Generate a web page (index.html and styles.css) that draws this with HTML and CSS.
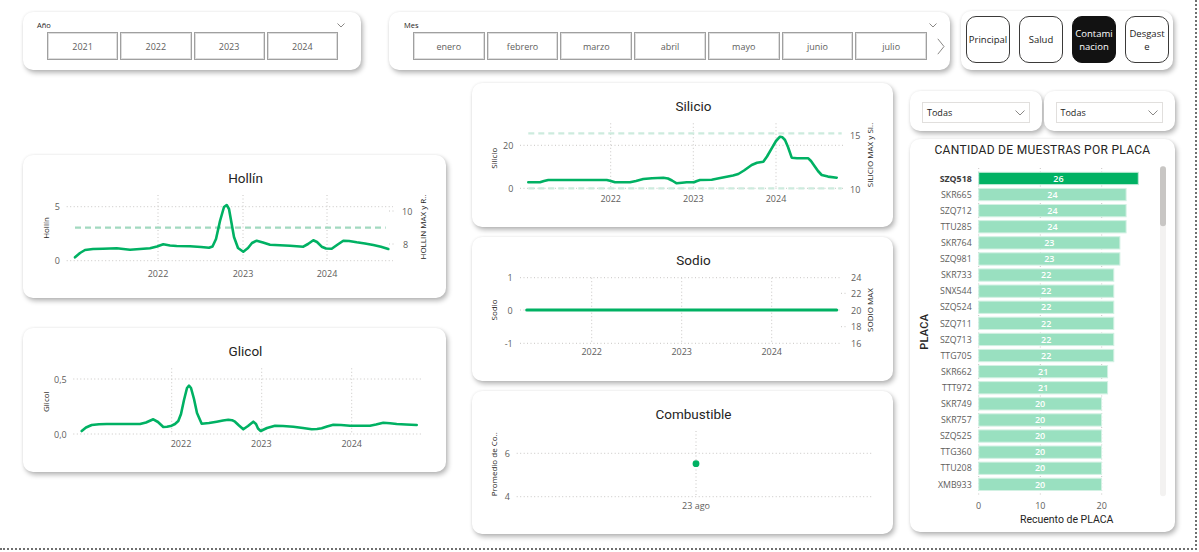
FILE: index.html
```html
<!DOCTYPE html>
<html lang="es">
<head>
<meta charset="utf-8">
<title>Contaminación</title>
<link rel="stylesheet" href="styles.css">
</head>
<body>
<div class="canvas">
  <div class="top">
    <section class="card slicer slicer-year">
      <div class="slicer-head"><span class="slicer-label">Año</span>
        <svg class="chev" width="8" height="5" viewBox="0 0 8 5"><polyline points="0.5,0.5 4,4 7.5,0.5"/></svg></div>
      <div class="chips chips-year">
        <div class="chip">2021</div><div class="chip">2022</div><div class="chip">2023</div><div class="chip">2024</div>
      </div>
    </section>
    <section class="card slicer slicer-month">
      <div class="slicer-head"><span class="slicer-label">Mes</span>
        <svg class="chev" width="8" height="5" viewBox="0 0 8 5"><polyline points="0.5,0.5 4,4 7.5,0.5"/></svg></div>
      <div class="chips-wrap">
        <div class="chips chips-month">
          <div class="chip">enero</div><div class="chip">febrero</div><div class="chip">marzo</div><div class="chip">abril</div><div class="chip">mayo</div><div class="chip">junio</div><div class="chip">julio</div>
        </div>
        <svg class="next" width="8" height="17" viewBox="0 0 8 17"><polyline points="0.8,0.8 7,8.5 0.8,16.2"/></svg>
      </div>
    </section>
    <nav class="card navcard">
      <div class="navbtn">Principal</div>
      <div class="navbtn">Salud</div>
      <div class="navbtn active">Contaminacion</div>
      <div class="navbtn">Desgaste</div>
    </nav>
  </div>

  <div class="main">
    <div class="col col-left">
      <section class="card chart h143">
        <h2 class="chart-title">Hollín</h2>
        <svg class="plot" width="423" height="111" viewBox="0 32 423 111">
          <line class="grid" x1="43.7" y1="51.7" x2="370" y2="51.7"/>
          <line class="grid" x1="43.7" y1="105.7" x2="370" y2="105.7"/>
          <line class="grid" x1="135" y1="40" x2="135" y2="106"/>
          <line class="grid" x1="220" y1="40" x2="220" y2="106"/>
          <line class="grid" x1="304" y1="40" x2="304" y2="106"/>
          <line class="grid" x1="366" y1="56" x2="373" y2="56"/>
          <line class="grid" x1="366" y1="89" x2="373" y2="89"/>
          <line class="ref" x1="52" y1="72.7" x2="362.7" y2="72.7"/>
          <text class="tick" x="37" y="55" text-anchor="end">5</text>
          <text class="tick" x="37" y="109" text-anchor="end">0</text>
          <text class="tick" x="379" y="59.5">10</text>
          <text class="tick" x="380" y="92.5">8</text>
          <text class="tick" x="135" y="122" text-anchor="middle">2022</text>
          <text class="tick" x="220" y="122" text-anchor="middle">2023</text>
          <text class="tick" x="304" y="122" text-anchor="middle">2024</text>
          <text class="atitle" transform="translate(26,73) rotate(-90)" text-anchor="middle">Hollín</text>
          <text class="atitle" transform="translate(403,72) rotate(-90)" text-anchor="middle">HOLLIN MAX y R..</text>
          <polyline class="line" points="52,102.3 57,98 62,95 70,94 80,93.7 93.7,93.3 107,94.7 117,94 127,93.3 134,91.5 140.3,89.3 147,90.5 153.7,91 167,91.3 178,92 186,92.8 189.5,91.5 193,84 197,66 201,52 203.7,50 206,54 208.5,68 211,82 215,93 220.3,96.7 225,93 229,88 233.7,85.7 240,87.5 247,89.7 257,90.2 267,90.7 280.3,91.7 285,89 290.3,85.3 294,87 298.7,91.7 303,93.5 308.7,93.7 314,90 320.3,85.7 326,86 333.7,87.3 342,88.5 350.3,90 358,91.8 365.3,94"/>
        </svg>
      </section>
      <section class="card chart h144">
        <h2 class="chart-title">Glicol</h2>
        <svg class="plot" width="423" height="112" viewBox="0 32 423 112">
          <line class="grid" x1="50.3" y1="51" x2="400.3" y2="51"/>
          <line class="grid" x1="50.3" y1="106" x2="400.3" y2="106"/>
          <line class="grid" x1="148.7" y1="40.3" x2="148.7" y2="106"/>
          <line class="grid" x1="238.7" y1="40.3" x2="238.7" y2="106"/>
          <line class="grid" x1="328.7" y1="40.3" x2="328.7" y2="106"/>
          <text class="tick" x="43.7" y="54.5" text-anchor="end">0,5</text>
          <text class="tick" x="43.7" y="109.5" text-anchor="end">0,0</text>
          <text class="tick" x="158" y="118.5" text-anchor="middle">2022</text>
          <text class="tick" x="238.3" y="118.5" text-anchor="middle">2023</text>
          <text class="tick" x="328.7" y="118.5" text-anchor="middle">2024</text>
          <text class="atitle" transform="translate(26,73.7) rotate(-90)" text-anchor="middle">Glicol</text>
          <polyline class="line" points="58.7,103 63,99.5 68.7,97 76,96.2 83.7,96 100,96 117,96 123,94.5 130.3,91.3 135,94 140.3,99 144,98.8 148.7,97.7 152,96 155.3,93 158,86 161,72 164,60 166,57.7 168,60 171,71 174,85 178.7,95.7 186,95 193.7,93.7 200,92.5 205.3,91.7 209,92.2 212,93.7 216,97.5 220.3,101.3 225,98 230.3,93.7 233,96 235,100.5 237.7,103 244,100 252,97.7 260,98 270.3,98.7 280,100 288.7,101.3 294,101 298.7,100.3 304,98.5 310.3,96.7 318,97 327,97.7 337,97.7 347,97.7 353,96.5 360.3,94.7 367,95.2 373.7,96 383,96.5 393.7,97"/>
        </svg>
      </section>
    </div>

    <div class="col col-mid">
      <section class="card chart h144">
        <h2 class="chart-title">Silicio</h2>
        <svg class="plot" width="421" height="112" viewBox="0 32 421 112">
          <line class="grid" x1="48" y1="62.3" x2="371.3" y2="62.3"/>
          <line class="grid" x1="48" y1="105.3" x2="371.3" y2="105.3"/>
          <line class="grid" x1="138.7" y1="40.3" x2="138.7" y2="105.3"/>
          <line class="grid" x1="221.3" y1="40.3" x2="221.3" y2="105.3"/>
          <line class="grid" x1="304" y1="40.3" x2="304" y2="105.3"/>
          <line class="ref light" x1="56.3" y1="50.3" x2="369.7" y2="50.3"/>
          <line class="ref light" x1="56.3" y1="105.3" x2="369.7" y2="105.3"/>
          <text class="tick" x="41.3" y="65.8" text-anchor="end">20</text>
          <text class="tick" x="41.3" y="108.8" text-anchor="end">0</text>
          <text class="tick" x="378" y="55.5">15</text>
          <text class="tick" x="378" y="109.5">10</text>
          <text class="tick" x="138.7" y="118.8" text-anchor="middle">2022</text>
          <text class="tick" x="221.3" y="118.8" text-anchor="middle">2023</text>
          <text class="tick" x="304" y="118.8" text-anchor="middle">2024</text>
          <text class="atitle" transform="translate(25,75.3) rotate(-90)" text-anchor="middle">Silicio</text>
          <text class="atitle" transform="translate(401,72) rotate(-90)" text-anchor="middle">SILICIO MAX y SI..</text>
          <polyline class="line" points="56.3,99.3 68,99.3 72,98 76.3,97 100,97 134.7,97 138,97.8 143,99.3 158,99.3 164,98 171.3,96 180,95.2 191.3,94.7 196,95.5 200,97.5 204.7,100.3 210,99.8 214.7,99.3 222,99.3 225,98 228,97 239.7,96.7 247,95.3 254.7,93.7 261,92.5 266.3,91 272,87.5 279.7,82 285,79.8 291.3,78.7 295,73.5 299.7,65.3 304,58 308,53.7 310.5,54.3 313,57 316,64 319.7,74.7 325,75.2 336.3,75.3 339,78 343,83.7 346,88 349.7,92 356,93.6 364.7,94.7"/>
        </svg>
      </section>
      <section class="card chart h144">
        <h2 class="chart-title">Sodio</h2>
        <svg class="plot" width="421" height="112" viewBox="0 32 421 112">
          <line class="grid" x1="48" y1="40.7" x2="369.7" y2="40.7"/>
          <line class="grid" x1="48" y1="73" x2="369.7" y2="73"/>
          <line class="grid" x1="48" y1="106.3" x2="369.7" y2="106.3"/>
          <line class="grid" x1="119.7" y1="40.7" x2="119.7" y2="106.3"/>
          <line class="grid" x1="209.7" y1="40.7" x2="209.7" y2="106.3"/>
          <line class="grid" x1="299.7" y1="40.7" x2="299.7" y2="106.3"/>
          <line class="grid" x1="369" y1="56.3" x2="374" y2="56.3"/>
          <line class="grid" x1="369" y1="89.7" x2="374" y2="89.7"/>
          <text class="tick" x="40.7" y="44.2" text-anchor="end">1</text>
          <text class="tick" x="40.7" y="76.5" text-anchor="end">0</text>
          <text class="tick" x="40.7" y="109.8" text-anchor="end">-1</text>
          <text class="tick" x="379" y="44.2">24</text>
          <text class="tick" x="379" y="59.8">22</text>
          <text class="tick" x="379" y="76.5">20</text>
          <text class="tick" x="379" y="93.2">18</text>
          <text class="tick" x="379" y="109.8">16</text>
          <text class="tick" x="119.7" y="118.2" text-anchor="middle">2022</text>
          <text class="tick" x="209.7" y="118.2" text-anchor="middle">2023</text>
          <text class="tick" x="299.7" y="118.2" text-anchor="middle">2024</text>
          <text class="atitle" transform="translate(25,73) rotate(-90)" text-anchor="middle">Sodio</text>
          <text class="atitle" transform="translate(401,73) rotate(-90)" text-anchor="middle">SODIO MAX</text>
          <line class="line flat" x1="54.7" y1="73" x2="364.7" y2="73"/>
        </svg>
      </section>
      <section class="card chart h143">
        <h2 class="chart-title">Combustible</h2>
        <svg class="plot" width="421" height="111" viewBox="0 32 421 111">
          <line class="grid" x1="44.7" y1="62.3" x2="401.3" y2="62.3"/>
          <line class="grid" x1="44.7" y1="105.7" x2="401.3" y2="105.7"/>
          <line class="grid" x1="224" y1="40" x2="224" y2="105.7"/>
          <circle class="dot" cx="224" cy="72.7" r="3.4"/>
          <text class="tick" x="38" y="65.8" text-anchor="end">6</text>
          <text class="tick" x="38" y="109.2" text-anchor="end">4</text>
          <text class="tick" x="224" y="117.8" text-anchor="middle">23 ago</text>
          <text class="atitle" transform="translate(25,73.3) rotate(-90)" text-anchor="middle">Promedio de Co..</text>
        </svg>
      </section>
    </div>

    <div class="col col-right">
      <div class="dd-row">
        <section class="card ddcard">
          <div class="dd"><span>Todas</span><svg class="dd-chev" width="10" height="6" viewBox="0 0 10 6"><polyline points="0.5,0.5 5,5 9.5,0.5"/></svg></div>
        </section>
        <section class="card ddcard">
          <div class="dd"><span>Todas</span><svg class="dd-chev" width="10" height="6" viewBox="0 0 10 6"><polyline points="0.5,0.5 5,5 9.5,0.5"/></svg></div>
        </section>
      </div>
      <section class="card barcard">
        <h2 class="bar-title">CANTIDAD DE MUESTRAS POR PLACA</h2>
        <svg class="plot" width="265" height="369" viewBox="0 24 265 369">
          <line class="grid" x1="68.7" y1="29" x2="68.7" y2="358"/>
          <line class="grid" x1="130.3" y1="29" x2="130.3" y2="358"/>
          <line class="grid" x1="191.7" y1="29" x2="191.7" y2="358"/>
          <g id="bars"></g>
          <rect class="track" x="250" y="27.3" width="6" height="330" rx="3"/>
          <rect class="thumb" x="250" y="27.3" width="6" height="60" rx="3"/>
          <text class="tick" x="68.7" y="370" text-anchor="middle">0</text>
          <text class="tick" x="130.3" y="370" text-anchor="middle">10</text>
          <text class="tick" x="191.7" y="370" text-anchor="middle">20</text>
          <text class="xlabel" x="156.7" y="384" text-anchor="middle">Recuento de PLACA</text>
          <text class="ylabel" transform="translate(18,192.7) rotate(-90)" text-anchor="middle">PLACA</text>

          <rect class="bar top" x="68.7" y="33.3" width="159.6" height="12.3"/>
          <text class="cat b" x="61.7" y="42.6" text-anchor="end">SZQ518</text>
          <text class="val" x="148.5" y="42.6" text-anchor="middle">26</text>

          <rect class="bar" x="68.7" y="49.4" width="147.4" height="12.3"/>
          <text class="cat" x="61.7" y="58.7" text-anchor="end">SKR665</text>
          <text class="val" x="142.4" y="58.7" text-anchor="middle">24</text>

          <rect class="bar" x="68.7" y="65.5" width="147.4" height="12.3"/>
          <text class="cat" x="61.7" y="74.8" text-anchor="end">SZQ712</text>
          <text class="val" x="142.4" y="74.8" text-anchor="middle">24</text>

          <rect class="bar" x="68.7" y="81.6" width="147.4" height="12.3"/>
          <text class="cat" x="61.7" y="90.9" text-anchor="end">TTU285</text>
          <text class="val" x="142.4" y="90.9" text-anchor="middle">24</text>

          <rect class="bar" x="68.7" y="97.7" width="141.2" height="12.3"/>
          <text class="cat" x="61.7" y="107" text-anchor="end">SKR764</text>
          <text class="val" x="139.3" y="107" text-anchor="middle">23</text>

          <rect class="bar" x="68.7" y="113.8" width="141.2" height="12.3"/>
          <text class="cat" x="61.7" y="123.1" text-anchor="end">SZQ981</text>
          <text class="val" x="139.3" y="123.1" text-anchor="middle">23</text>

          <rect class="bar" x="68.7" y="129.9" width="135.1" height="12.3"/>
          <text class="cat" x="61.7" y="139.2" text-anchor="end">SKR733</text>
          <text class="val" x="136.2" y="139.2" text-anchor="middle">22</text>

          <rect class="bar" x="68.7" y="146" width="135.1" height="12.3"/>
          <text class="cat" x="61.7" y="155.3" text-anchor="end">SNX544</text>
          <text class="val" x="136.2" y="155.3" text-anchor="middle">22</text>

          <rect class="bar" x="68.7" y="162.1" width="135.1" height="12.3"/>
          <text class="cat" x="61.7" y="171.4" text-anchor="end">SZQ524</text>
          <text class="val" x="136.2" y="171.4" text-anchor="middle">22</text>

          <rect class="bar" x="68.7" y="178.2" width="135.1" height="12.3"/>
          <text class="cat" x="61.7" y="187.5" text-anchor="end">SZQ711</text>
          <text class="val" x="136.2" y="187.5" text-anchor="middle">22</text>

          <rect class="bar" x="68.7" y="194.3" width="135.1" height="12.3"/>
          <text class="cat" x="61.7" y="203.6" text-anchor="end">SZQ713</text>
          <text class="val" x="136.2" y="203.6" text-anchor="middle">22</text>

          <rect class="bar" x="68.7" y="210.4" width="135.1" height="12.3"/>
          <text class="cat" x="61.7" y="219.7" text-anchor="end">TTG705</text>
          <text class="val" x="136.2" y="219.7" text-anchor="middle">22</text>

          <rect class="bar" x="68.7" y="226.5" width="128.9" height="12.3"/>
          <text class="cat" x="61.7" y="235.8" text-anchor="end">SKR662</text>
          <text class="val" x="133.2" y="235.8" text-anchor="middle">21</text>

          <rect class="bar" x="68.7" y="242.6" width="128.9" height="12.3"/>
          <text class="cat" x="61.7" y="251.9" text-anchor="end">TTT972</text>
          <text class="val" x="133.2" y="251.9" text-anchor="middle">21</text>

          <rect class="bar" x="68.7" y="258.7" width="122.8" height="12.3"/>
          <text class="cat" x="61.7" y="268" text-anchor="end">SKR749</text>
          <text class="val" x="130.1" y="268" text-anchor="middle">20</text>

          <rect class="bar" x="68.7" y="274.8" width="122.8" height="12.3"/>
          <text class="cat" x="61.7" y="284.1" text-anchor="end">SKR757</text>
          <text class="val" x="130.1" y="284.1" text-anchor="middle">20</text>

          <rect class="bar" x="68.7" y="290.9" width="122.8" height="12.3"/>
          <text class="cat" x="61.7" y="300.2" text-anchor="end">SZQ525</text>
          <text class="val" x="130.1" y="300.2" text-anchor="middle">20</text>

          <rect class="bar" x="68.7" y="307" width="122.8" height="12.3"/>
          <text class="cat" x="61.7" y="316.3" text-anchor="end">TTG360</text>
          <text class="val" x="130.1" y="316.3" text-anchor="middle">20</text>

          <rect class="bar" x="68.7" y="323.1" width="122.8" height="12.3"/>
          <text class="cat" x="61.7" y="332.4" text-anchor="end">TTU208</text>
          <text class="val" x="130.1" y="332.4" text-anchor="middle">20</text>

          <rect class="bar" x="68.7" y="339.2" width="122.8" height="12.3"/>
          <text class="cat" x="61.7" y="348.5" text-anchor="end">XMB933</text>
          <text class="val" x="130.1" y="348.5" text-anchor="middle">20</text>
        </svg>
      </section>
    </div>
  </div>
</div>
</body>
</html>
```

FILE: styles.css
```css
html, body {
  margin: 0;
  padding: 0;
  background: #ffffff;
  font-family: "Open Sans", "Noto Sans", sans-serif;
  color: #252423;
}

.canvas {
  box-sizing: border-box;
  width: 1197px;
  height: 550px;
  padding: 12px 0 0 23px;
  border-right: 2px dotted #6f6f6f;
  border-bottom: 2px dotted #6f6f6f;
  overflow: hidden;
}

.card {
  box-sizing: border-box;
  background: #ffffff;
  border-radius: 10px;
  box-shadow: 2px 3px 5px rgba(0, 0, 0, 0.28), 0 0 3px rgba(0, 0, 0, 0.08);
}

/* ---------- top row ---------- */
.top {
  display: flex;
  align-items: flex-start;
}

.slicer {
  height: 58px;
  padding: 8px 0 0 14px;
}

.slicer-year {
  width: 338px;
  margin-right: 28px;
}

.slicer-month {
  width: 561px;
  margin-right: 11px;
  padding-left: 15px;
}

.slicer-head {
  display: flex;
  align-items: center;
  justify-content: space-between;
  height: 10px;
}

.slicer-year .slicer-head { width: 308px; }
.slicer-month .slicer-head { width: 533px; }

.slicer-label {
  font-size: 7.5px;
  line-height: 10px;
  color: #252423;
}

.chev polyline,
.dd-chev polyline,
.next polyline {
  fill: none;
  stroke: #8a8886;
  stroke-width: 1;
}

.chips {
  display: flex;
  gap: 2px;
}

.chips-year {
  width: 291px;
  margin: 2px 0 0 10px;
}

.chips-wrap {
  display: flex;
  align-items: center;
  margin: 2px 0 0 9px;
}

.chips-month {
  width: 514px;
}

.next {
  margin-left: 10px;
}

.chip {
  flex: 1;
  box-sizing: border-box;
  height: 28px;
  border: 1px solid #a0a0a0;
  box-shadow: inset 0 0 0 1px #dedede;
  display: flex;
  align-items: center;
  justify-content: center;
  font-size: 9px;
  color: #605e5c;
}

.navcard {
  width: 212px;
  height: 59px;
  margin-top: -1px;
  display: flex;
  gap: 9px;
  padding: 5px 0 0 5px;
}

.navbtn {
  box-sizing: border-box;
  width: 44px;
  height: 47px;
  border: 1px solid #3b3a39;
  border-radius: 10px;
  display: flex;
  align-items: center;
  justify-content: center;
  text-align: center;
  font-size: 9.5px;
  line-height: 13px;
  color: #1b1a19;
  padding: 0 1px;
  word-break: break-all;
}

.navbtn.active {
  background: #121212;
  color: #ffffff;
  border-color: #121212;
}

/* ---------- main area ---------- */
.main {
  display: flex;
  align-items: flex-start;
  margin-top: 13px;
}

.col {
  display: flex;
  flex-direction: column;
}

.col-left {
  width: 423px;
  padding-top: 72px;
  gap: 30px;
}

.col-mid {
  width: 421px;
  margin-left: 26px;
  gap: 10px;
}

.col-right {
  width: 265px;
  margin-left: 17px;
  padding-top: 8px;
  gap: 8px;
}

.chart.h143 { height: 143px; }
.chart.h144 { height: 144px; }

.chart-title {
  box-sizing: border-box;
  margin: 0;
  height: 32px;
  padding: 15px 0 0 22px;
  text-align: center;
  font-family: Roboto, "Open Sans", sans-serif;
  font-weight: 400;
  font-size: 13.5px;
  line-height: 17px;
  color: #252423;
}

.plot {
  display: block;
}

.tick {
  font-family: "Open Sans", "Noto Sans", sans-serif;
  font-size: 9px;
  fill: #605e5c;
}

.atitle {
  font-family: "Open Sans", "Noto Sans", sans-serif;
  font-size: 8px;
  fill: #252423;
}

.grid {
  stroke: #c8c6c4;
  stroke-width: 1;
  stroke-dasharray: 1 2.5;
}

.ref {
  stroke: #a2d9c0;
  stroke-width: 2.2;
  stroke-dasharray: 6 4;
}

.ref.light {
  stroke: #cdebde;
}

.line {
  fill: none;
  stroke: #00b163;
  stroke-width: 2.6;
  stroke-linejoin: round;
  stroke-linecap: round;
}

.line.flat {
  stroke-width: 3;
}

.dot {
  fill: #00b163;
}

/* ---------- right column ---------- */
.dd-row {
  display: flex;
  gap: 2px;
  height: 40px;
}

.ddcard {
  flex: 1;
  padding: 11px 12px 0 12px;
}

.dd {
  box-sizing: border-box;
  height: 21px;
  border: 1px solid #e1dfdd;
  display: flex;
  align-items: center;
  justify-content: space-between;
  padding: 0 4px 0 4px;
  font-size: 9px;
  color: #252423;
}

.barcard {
  height: 393px;
}

.bar-title {
  box-sizing: border-box;
  margin: 0;
  height: 24px;
  padding-top: 4px;
  text-align: center;
  font-family: Roboto, "Open Sans", sans-serif;
  font-weight: 400;
  font-size: 12px;
  line-height: 15px;
  letter-spacing: 0.3px;
  color: #252423;
}

.bar {
  fill: #99e0c0;
  stroke: #d2f1e3;
  stroke-width: 1;
}

.bar.top {
  fill: #00b163;
  stroke: #bfead6;
}

.cat {
  font-family: "Open Sans", "Noto Sans", sans-serif;
  font-size: 8.8px;
  fill: #605e5c;
}

.cat.b {
  font-weight: 700;
  fill: #3b3a39;
}

.val {
  font-family: "Open Sans", "Noto Sans", sans-serif;
  font-size: 9px;
  font-weight: 600;
  fill: #ffffff;
}

.track { fill: #f3f2f1; }
.thumb { fill: #c8c6c4; }

.xlabel {
  font-family: Roboto, "Open Sans", sans-serif;
  font-size: 10.5px;
  fill: #252423;
}

.ylabel {
  font-family: Roboto, "Open Sans", sans-serif;
  font-size: 11px;
  font-weight: 500;
  fill: #252423;
  letter-spacing: 0.3px;
}
```
